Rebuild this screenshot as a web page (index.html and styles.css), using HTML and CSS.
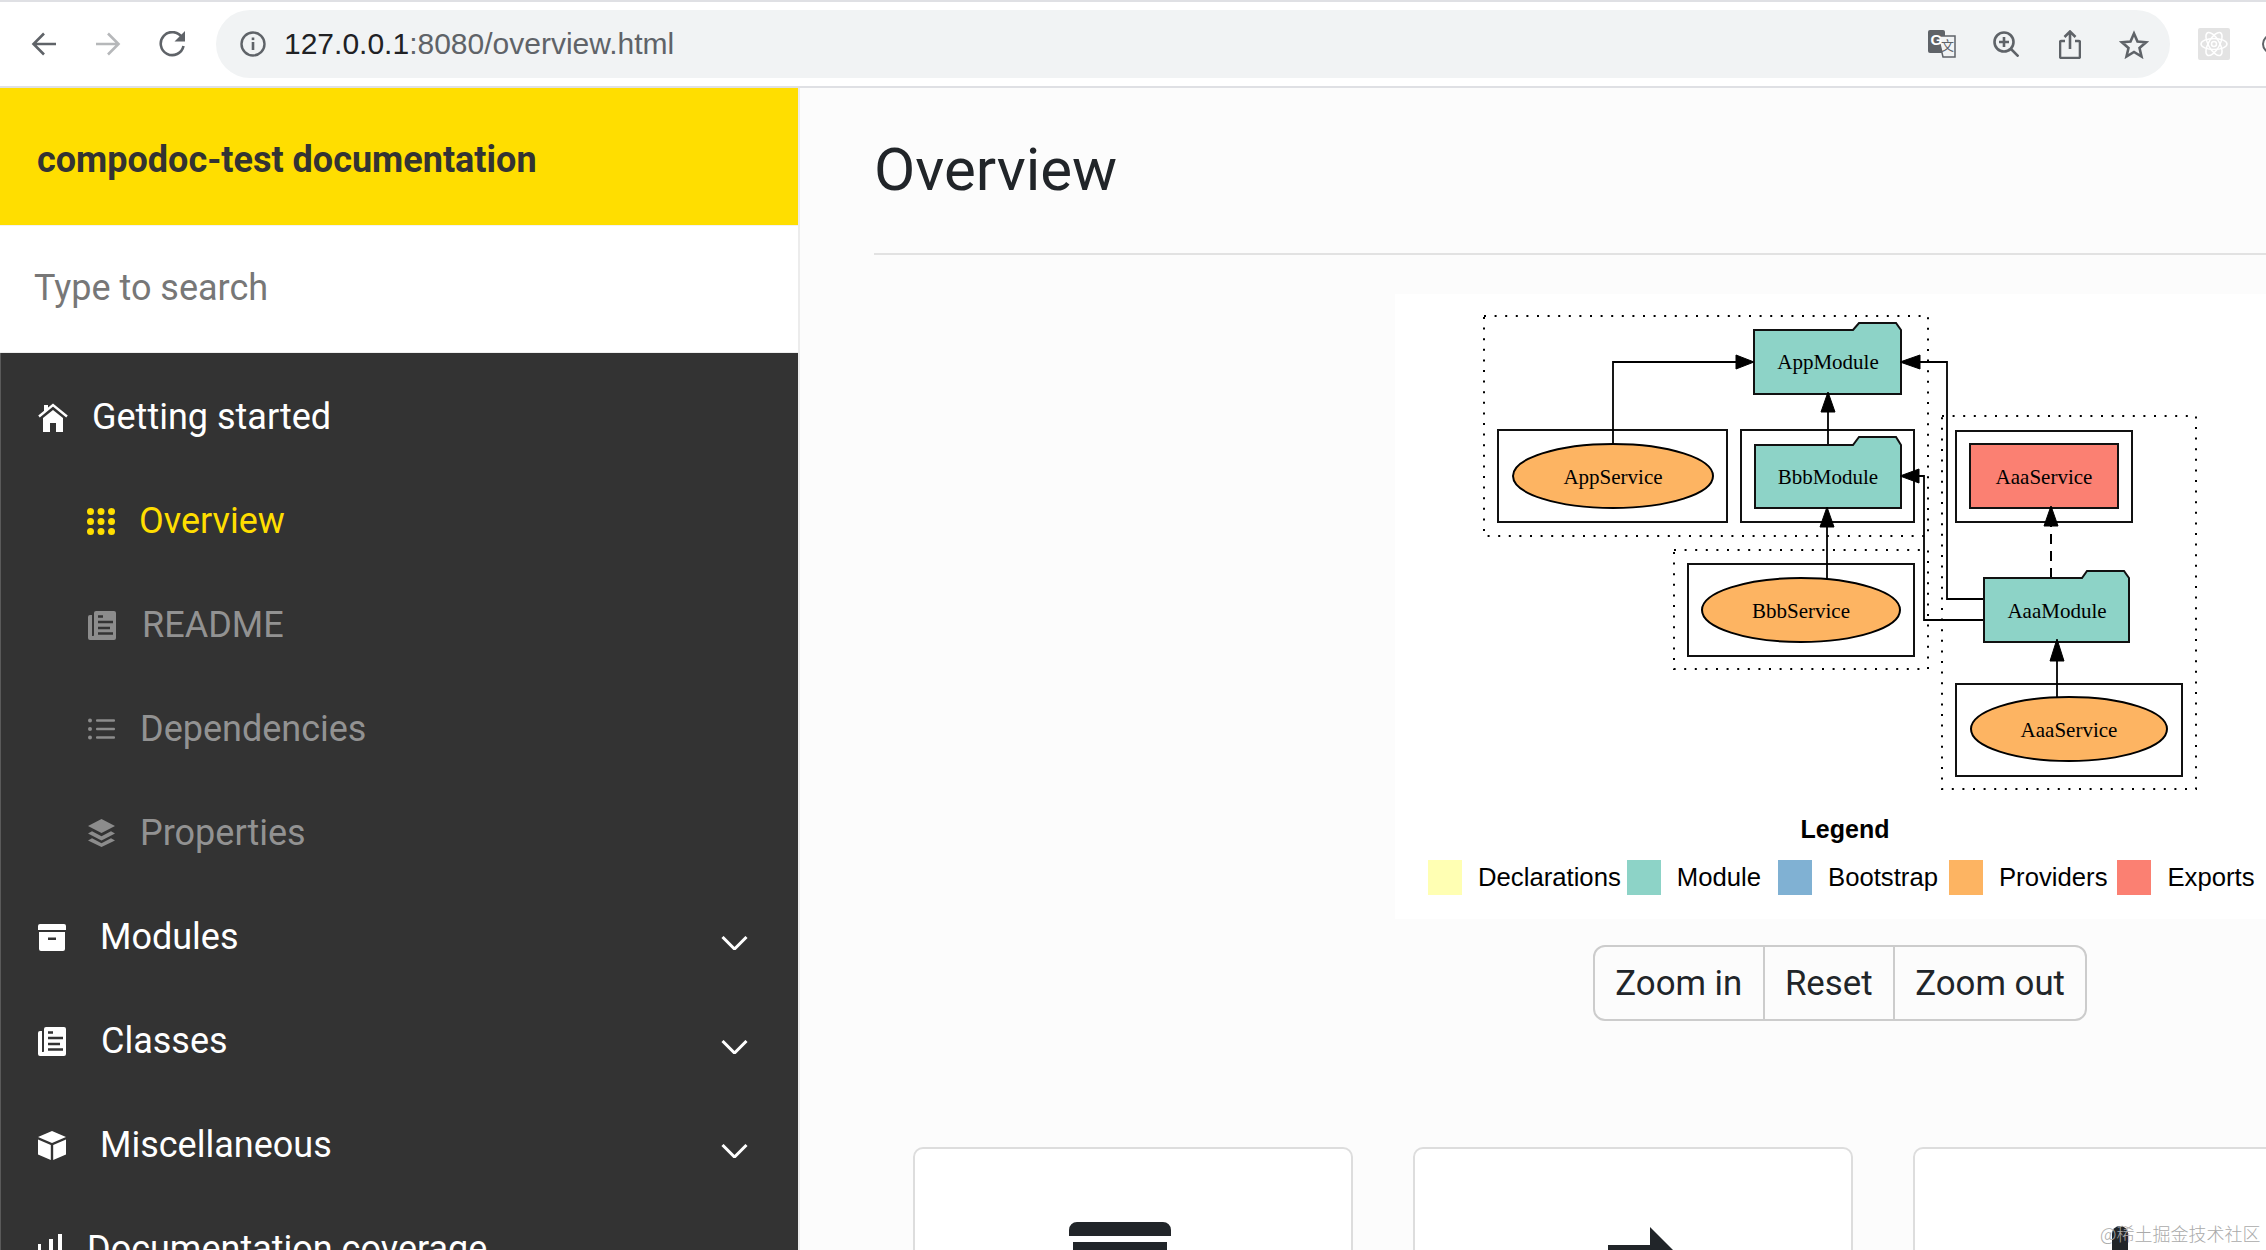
FILE: index.html
```html
<!DOCTYPE html>
<html lang="en">
<head>
<meta charset="utf-8">
<title>compodoc-test documentation</title>
<link rel="stylesheet" href="styles.css">
</head>
<body>
<header class="toolbar">
  <svg class="tb-icon w26" viewBox="0 0 26 24"><path class="tb-stroke" d="M25 12H3M13 1.5 2.5 12 13 22.5"/></svg>
  <svg class="tb-icon w26 faded" viewBox="0 0 26 24"><path class="tb-stroke" d="M1 12h22M13 1.5 23.5 12 13 22.5"/></svg>
  <svg class="tb-icon w27" viewBox="0 0 27 26"><path class="tb-stroke" d="M23 6.5A11.5 11.5 0 1 0 24.5 15"/><path class="tb-fill" d="M26 0v10.500H15.500z"/></svg>
  <div class="omnibox">
    <svg class="tb-icon w26" viewBox="0 0 26 26"><circle class="tb-stroke thin" cx="13" cy="13" r="11.500"/><rect class="tb-fill" x="11.700" y="11" width="2.600" height="8"/><rect class="tb-fill" x="11.700" y="6.500" width="2.600" height="2.600"/></svg>
    <span class="url"><span class="url-host">127.0.0.1</span>:8080/overview.html</span>
    <div class="omni-actions">
      <svg class="w28" viewBox="0 0 28 28">
        <rect class="tb-fill" x="0" y="0" width="17" height="23" rx="2"/>
        <path class="page" d="M10 6h17v21H15z"/>
        <text class="tr-g" x="2.500" y="15">G</text>
        <text class="tr-zh" x="13" y="20">文</text>
      </svg>
      <svg class="w26 after-zoom" viewBox="0 0 26 26"><circle class="tb-stroke" cx="11" cy="11" r="9.500"/><path class="tb-stroke" d="M18 18l7.500 7.500M11 6v10M6 11h10"/></svg>
      <svg class="w22 after-share" viewBox="0 0 22 29"><path class="tb-stroke" d="M6 11H2.500a1.500 1.500 0 0 0-1.500 1.500V26.500A1.500 1.500 0 0 0 2.500 28h17a1.500 1.500 0 0 0 1.500-1.500V12.500A1.500 1.500 0 0 0 19.500 11H16M11 19V2M5.500 7 11 1.500 16.500 7"/></svg>
      <svg class="w30" viewBox="0 0 30 29"><path class="tb-stroke" d="M15 3.500 18.500 11.500 27 12.300 20.500 18 22.500 26.500 15 22 7.500 26.500 9.500 18 3 12.300 11.500 11.500z"/></svg>
    </div>
  </div>
  <div class="ext-react">
    <svg viewBox="0 0 32 32"><g class="atom"><ellipse cx="16" cy="16" rx="13" ry="5.500"/><ellipse cx="16" cy="16" rx="13" ry="5.500" transform="rotate(60 16 16)"/><ellipse cx="16" cy="16" rx="13" ry="5.500" transform="rotate(120 16 16)"/><circle cx="16" cy="16" r="2.500"/></g></svg>
  </div>
  <div class="ext-partial"></div>
</header>

<div class="layout">
  <aside class="sidebar">
    <div class="brand">compodoc-test documentation</div>
    <div class="search"><input class="search-input" type="text" placeholder="Type to search"></div>
    <nav class="nav">
      <a class="row top">
        <svg class="ic i-home" viewBox="0 0 30 29"><path class="ic-line" d="M1 13.500 15 2l14 11.500"/><path d="M5 15 15 7l10 8v14h-7v-9h-6v9H5zM6 2h4v4l-4 3z"/></svg>
        <span class="gap24">Getting started</span>
      </a>
      <a class="row sub active">
        <svg class="ic" width="28" height="27" viewBox="0 0 28 27"><circle cx="3.500" cy="3.500" r="3.500"/><circle cx="14" cy="3.500" r="3.500"/><circle cx="24.500" cy="3.500" r="3.500"/><circle cx="3.500" cy="13.500" r="3.500"/><circle cx="14" cy="13.500" r="3.500"/><circle cx="24.500" cy="13.500" r="3.500"/><circle cx="3.500" cy="23.500" r="3.500"/><circle cx="14" cy="23.500" r="3.500"/><circle cx="24.500" cy="23.500" r="3.500"/></svg>
        <span class="gap24">Overview</span>
      </a>
      <a class="row sub">
        <svg class="ic" width="28" height="29" viewBox="0 0 28 29"><path d="M8 0h18a2 2 0 0 1 2 2v25a2 2 0 0 1-2 2H2a2 2 0 0 1-2-2V6a2 2 0 0 1 2-2h2v21h1.500a1 1 0 0 0 .5-1V2a2 2 0 0 1 2-2z"/><path class="ic-cut" d="M10 5.500h5M10 11h15M10 17h12M10 22.500h15"/></svg>
        <span class="gap26">README</span>
      </a>
      <a class="row sub">
        <svg class="ic" width="27" height="22" viewBox="0 0 27 22"><circle cx="2" cy="2.500" r="2"/><circle cx="2" cy="11" r="2"/><circle cx="2" cy="19.500" r="2"/><rect x="8" y="1.300" width="19" height="2.400" rx="1"/><rect x="8" y="9.800" width="19" height="2.400" rx="1"/><rect x="8" y="18.300" width="19" height="2.400" rx="1"/></svg>
        <span class="gap25">Dependencies</span>
      </a>
      <a class="row sub">
        <svg class="ic" width="27" height="28" viewBox="0 0 27 28"><path d="M13.500 0 27 7l-13.500 7L0 7zM4 12.300l9.500 5 9.500-5 4 2.200-13.500 7L0 14.500zM4 19.300l9.500 5 9.500-5 4 2.200L13.500 28 0 21.500z"/></svg>
        <span class="gap25">Properties</span>
      </a>
      <a class="row top">
        <svg class="ic" width="28" height="27" viewBox="0 0 28 27"><path d="M2 0h24a2 2 0 0 1 2 2v4H0V2a2 2 0 0 1 2-2zM1 8h26v17a2 2 0 0 1-2 2H3a2 2 0 0 1-2-2zM10 13.500v2.500h8v-2.500z" fill-rule="evenodd"/></svg>
        <span class="gap34">Modules</span>
        <svg class="chev" viewBox="0 0 27 14"><path d="M1.500 1 13.500 13 25.500 1"/></svg>
      </a>
      <a class="row top">
        <svg class="ic" width="28" height="29" viewBox="0 0 28 29"><path d="M8 0h18a2 2 0 0 1 2 2v25a2 2 0 0 1-2 2H2a2 2 0 0 1-2-2V6a2 2 0 0 1 2-2h2v21h1.500a1 1 0 0 0 .5-1V2a2 2 0 0 1 2-2z"/><path class="ic-cut" d="M10 5.500h5M10 11h15M10 17h12M10 22.500h15"/></svg>
        <span class="gap35">Classes</span>
        <svg class="chev" viewBox="0 0 27 14"><path d="M1.500 1 13.500 13 25.500 1"/></svg>
      </a>
      <a class="row top">
        <svg class="ic" width="28" height="29" viewBox="0 0 28 29"><path d="M14 0 28 6 14 12 0 6zM0 8.500l12.800 5.500v15L0 23.500zM28 8.500l-12.800 5.500v15L28 23.500z"/></svg>
        <span class="gap34">Miscellaneous</span>
        <svg class="chev" viewBox="0 0 27 14"><path d="M1.500 1 13.500 13 25.500 1"/></svg>
      </a>
      <a class="row top">
        <svg class="ic" width="26" height="30" viewBox="0 0 26 30"><rect x="0" y="24" width="26" height="3"/><rect x="0" y="10" width="3" height="17"/><rect x="11" y="5" width="4" height="20"/><rect x="20" y="0" width="4" height="25"/></svg>
        <span class="gap23">Documentation coverage</span>
      </a>
    </nav>
  </aside>

  <main class="main">
    <h1 class="title">Overview</h1>
    <hr class="rule">
    <section class="panel">
      <svg class="graph" width="871" height="520" viewBox="1395 294 871 520">
        <g class="dots">
          <rect x="1484" y="316" width="444" height="220"/>
          <rect x="1674" y="550" width="254" height="119"/>
          <rect x="1942" y="416" width="254" height="373"/>
        </g>
        <g class="frames">
          <rect x="1498" y="430" width="229" height="92"/>
          <rect x="1741" y="430" width="173" height="92"/>
          <rect x="1688" y="564" width="226" height="92"/>
          <rect x="1956" y="431" width="176" height="91"/>
          <rect x="1956" y="684" width="226" height="92"/>
        </g>
        <g class="edges">
          <path d="M1613 444V362H1738"/>
          <path d="M1828 445V410"/>
          <path d="M1827 579V525"/>
          <path d="M1984 599H1947V362H1918"/>
          <path d="M1984 620H1924V476H1917"/>
          <path d="M2057 698V659"/>
          <path class="dashed" d="M2051 578V526"/>
        </g>
        <g class="module">
          <path d="M1754 330H1853L1859 323H1896L1901 330V394H1754Z"/>
          <path d="M1755 445H1853L1859 437H1896L1901 445V508H1755Z"/>
          <path d="M1984 578H2082L2087 571H2124L2129 578V642H1984Z"/>
        </g>
        <g class="service">
          <ellipse cx="1613" cy="476" rx="100" ry="32"/>
          <ellipse cx="1801" cy="610" rx="99" ry="32"/>
          <ellipse cx="2069" cy="729" rx="98" ry="32"/>
        </g>
        <rect class="export" x="1970" y="444" width="148" height="64"/>
        <g class="heads">
          <polygon points="1754,362 1736,355 1736,369"/>
          <polygon points="1900,362 1920,355 1920,369"/>
          <polygon points="1828,392 1821,412 1835,412"/>
          <polygon points="1827,507 1820,527 1834,527"/>
          <polygon points="1900,476 1919,469 1919,483"/>
          <polygon points="2051,506 2044,526 2058,526"/>
          <polygon points="2057,639 2050,661 2064,661"/>
        </g>
        <g class="labels">
          <text x="1828" y="369">AppModule</text>
          <text x="1613" y="484">AppService</text>
          <text x="1828" y="484">BbbModule</text>
          <text x="1801" y="618">BbbService</text>
          <text x="2044" y="484">AaaService</text>
          <text x="2057" y="618">AaaModule</text>
          <text x="2069" y="737">AaaService</text>
        </g>
      </svg>
      <div class="legend">
        <div class="legend-title">Legend</div>
        <div class="legend-row">
          <span class="swatch s-decl"></span><span class="legend-label after-7">Declarations</span>
          <span class="swatch s-mod"></span><span class="legend-label after-17">Module</span>
          <span class="swatch s-boot"></span><span class="legend-label after-9">Bootstrap</span>
          <span class="swatch s-prov"></span><span class="legend-label after-13">Providers</span>
          <span class="swatch s-exp"></span><span class="legend-label">Exports</span>
        </div>
      </div>
    </section>
    <div class="btn-group">
      <button class="btn">Zoom in</button>
      <button class="btn">Reset</button>
      <button class="btn">Zoom out</button>
    </div>
    <div class="cards">
      <article class="card">
        <svg class="card-icon ci-archive" width="102" height="60" viewBox="0 0 102 60"><path d="M8 0h86a8 8 0 0 1 8 8v6H0V8a8 8 0 0 1 8-8zM4 20h94v40H4z"/></svg>
      </article>
      <article class="card">
        <svg class="card-icon ci-arrow" width="87" height="90" viewBox="0 0 87 90"><polygon points="0,18 42,18 42,0 87,45 42,90 42,72 0,72"/></svg>
      </article>
      <article class="card">
        <svg class="card-icon ci-pin" width="16" height="60" viewBox="0 0 16 60"><path d="M0 8a8 8 0 0 1 16 0v52H0z"/></svg>
      </article>
    </div>
  </main>
</div>
<div class="watermark">@稀土掘金技术社区</div>
</body>
</html>
```

FILE: styles.css
```css
* { box-sizing: border-box; }
html, body { margin: 0; height: 1250px; overflow: hidden; }
body { font-family: Roboto, "Liberation Sans", sans-serif; background: #fcfcfc; color: #212529; }

/* browser toolbar */
.toolbar {
  height: 88px; display: flex; align-items: center; padding-left: 31px;
  background: #fff; border-top: 2px solid #dfe0e4; border-bottom: 2px solid #dfe0e4;
  overflow: hidden;
}
.tb-icon { flex: none; margin-right: 38px; }
.tb-stroke { fill: none; stroke: #5f6368; stroke-width: 2.6; }
.tb-stroke.thin { stroke-width: 2.400; }
.tb-fill { fill: #5f6368; }
.faded { opacity: .45; }
.w22 { width: 22px; height: 29px; flex: none; }
.w26 { width: 26px; height: 26px; flex: none; }
.w27 { width: 27px; height: 26px; flex: none; margin-right: 30px; }
.w28 { width: 28px; height: 28px; flex: none; }
.w30 { width: 30px; height: 29px; flex: none; }
.omnibox {
  width: 1954px; height: 68px; flex: none; display: flex; align-items: center;
  background: #f1f3f4; border-radius: 34px; padding: 0 21px 0 24px;
}
.omnibox .tb-icon { margin-right: 18px; }
.url { font: 30px "Liberation Sans", sans-serif; color: #5f6368; }
.url-host { color: #202124; }
.omni-actions { margin-left: auto; display: flex; align-items: center; gap: 37px; }
.after-zoom { margin-right: 3px; }
.after-share { margin-right: 1px; }
.page { fill: #f1f3f4; stroke: #5f6368; stroke-width: 1.500; }
.tr-g { font: bold 15px "Liberation Sans", sans-serif; fill: #fff; }
.tr-zh { font: 13px "Noto Sans CJK SC", sans-serif; fill: #5f6368; }
.ext-react {
  width: 32px; height: 32px; flex: none; margin-left: 28px; background: #e3e3e3; border-radius: 2px;
}
.ext-react svg { display: block; width: 32px; height: 32px; }
.atom { fill: none; stroke: #fff; stroke-width: 1.500; }
.ext-partial {
  width: 20px; height: 20px; flex: none; margin-left: 32px;
  border: 2px solid #5f6368; border-radius: 50%;
}

/* layout */
.layout { display: flex; height: 1162px; }
.sidebar { width: 800px; flex: none; border-right: 2px solid #ececec; background: #fff; }
.brand {
  height: 137px; display: flex; align-items: center; padding: 7px 0 0 37px;
  background: #ffde00; color: #333; font-size: 36px; font-weight: 700;
}
.search { height: 128px; padding: 0 34px 2px; display: flex; align-items: center; border-top: 1px solid #f2f2f2; border-bottom: 1px solid #eee; }
.search-input {
  width: 100%; border: 0; outline: 0; background: transparent; padding: 0;
  font: 36px Roboto, sans-serif; color: #777;
}
.search-input::placeholder { color: #777; opacity: 1; }
.nav { background: #333; height: 900px; padding-top: 12px; overflow: hidden; border-left: 1px solid #5a5a5a; }

.row { height: 104px; display: flex; align-items: center; font-size: 36px; color: #fff; fill: #fff; }
.row.top { padding-left: 37px; }
.row.sub { padding-left: 87px; color: #929292; fill: #8c8c8c; }
.row.sub.active { padding-left: 86px; color: #ffde00; fill: #ffde00; }
.ic { flex: none; display: block; }
.i-home { width: 30px; height: 29px; }
.ic-line { fill: none; stroke: #fff; stroke-width: 2.400; }
.ic-cut { fill: none; stroke: #333; stroke-width: 2.400; }
.gap23 { margin-left: 23px; }
.gap24 { margin-left: 24px; }
.gap25 { margin-left: 25px; }
.gap26 { margin-left: 26px; }
.gap34 { margin-left: 34px; }
.gap35 { margin-left: 35px; }
.chev { width: 27px; height: 14px; margin: 12px 50px 0 auto; flex: none; fill: none; stroke: #fff; stroke-width: 3; }

/* main */
.main { flex: 1; min-width: 0; padding-left: 74px; }
.title { margin: 0; padding: 46px 0 47px; font-size: 60px; line-height: 72px; font-weight: 400; color: #212529; }
.rule { margin: 0; border: 0; border-top: 2px solid #e2e2e2; }
.panel { margin: 39px 0 0 521px; width: 871px; height: 625px; background: #fff; }
.graph { display: block; }
.dots rect { fill: none; stroke: #000; stroke-width: 2; stroke-dasharray: 2 8.600; }
.frames rect { fill: none; stroke: #111; stroke-width: 2; }
.edges path { fill: none; stroke: #000; stroke-width: 1.800; }
.edges .dashed { stroke-dasharray: 10 7; stroke-width: 2; }
.module path { fill: #8dd3c7; stroke: #111; stroke-width: 2; }
.service ellipse { fill: #fdb462; stroke: #000; stroke-width: 2; }
.export { fill: #fb8072; stroke: #111; stroke-width: 2; }
.heads polygon { fill: #000; stroke: #000; stroke-width: 1; }
.labels text { font: 21px "Liberation Serif", serif; fill: #000; text-anchor: middle; }

.legend { margin-left: 33px; width: 832px; font-family: "Liberation Sans", sans-serif; color: #000; }
.legend-title { height: 30px; padding-left: 2px; line-height: 30px; font-size: 25px; font-weight: 700; text-align: center; }
.legend-row { display: flex; align-items: center; margin-top: 16px; font-size: 25.700px; }
.swatch { width: 34px; height: 35px; flex: none; margin-right: 16px; }
.legend-label { white-space: nowrap; }
.after-7 { margin-right: 6px; }
.after-17 { margin-right: 17px; }
.after-9 { margin-right: 11px; }
.after-13 { margin-right: 10px; }
.s-decl { background: #ffffb3; }
.s-mod { background: #8dd3c7; }
.s-boot { background: #80b1d3; }
.s-prov { background: #fdb462; }
.s-exp { background: #fb8072; }

.btn-group {
  display: flex; width: max-content; height: 76px; margin: 26px 0 0 719px;
  border: 2px solid #ccc; border-radius: 12px; overflow: hidden;
}
.btn {
  height: 100%; padding: 0 20.300px; border: 0; border-right: 2px solid #ccc; background: transparent;
  font: 34.800px Roboto, sans-serif; color: #212529;
}
.btn:last-child { border-right: 0; }

.cards { display: flex; gap: 60px; margin: 126px 0 0 39px; }
.card {
  width: 440px; height: 240px; flex: none; background: #fff;
  border: 2px solid #ddd; border-radius: 10px;
}
.card-icon { display: block; fill: #212529; }
.ci-archive { margin: 73px 0 0 154px; }
.ci-arrow { margin: 78px 0 0 193px; }
.ci-pin { margin: 77px 0 0 197px; }

.watermark {
  position: absolute; left: 2100px; top: 1222px;
  font: 300 18px/22px "Noto Sans CJK SC", sans-serif; color: #aaa; white-space: nowrap;
}
```
